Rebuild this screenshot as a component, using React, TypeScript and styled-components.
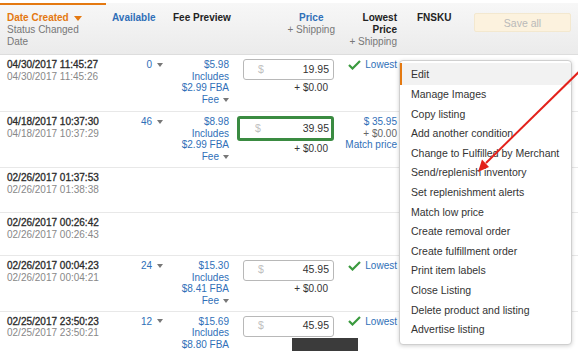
import React from "react";
import styled, { createGlobalStyle } from "styled-components";

const Global = createGlobalStyle`
  html, body { margin: 0; padding: 0; background: #fff; }
  body {
    font-family: "Liberation Sans", Arial, sans-serif;
    font-size: 10px;
    color: #333;
    width: 578px;
    height: 351px;
    overflow: hidden;
  }
`;

const COLS = "106px 59px 70px 105px 60px 68px 1fr";

const BLUE = "#2f6fb8";
const ORANGE = "#e47911";

const Page = styled.div`
  position: relative;
  width: 578px;
  height: 351px;
  overflow: hidden;
  padding-top: 3px;
  box-sizing: border-box;
`;

const Header = styled.div`
  display: grid;
  grid-template-columns: ${COLS};
  height: 52px;
  box-sizing: border-box;
  background: linear-gradient(#f7f7f7, #ebebeb);
  border-bottom: 1px solid #dddddd;
  line-height: 12px;
`;

const HeadCell = styled.div<{ $align?: "left" | "right" | "center"; $padL?: number; $padR?: number }>`
  display: flex;
  flex-direction: column;
  align-items: ${(p) => (p.$align === "right" ? "flex-end" : p.$align === "center" ? "center" : "flex-start")};
  text-align: ${(p) => p.$align ?? "left"};
  padding: 9px ${(p) => p.$padR ?? 0}px 0 ${(p) => p.$padL ?? 0}px;
`;

const SortHead = styled.div`
  border-top: 2px solid ${ORANGE};
  padding: 7px 0 0 7px;
`;

const HeadTitle = styled.div<{ $tone: "orange" | "blue" | "dark" }>`
  font-weight: bold;
  color: ${(p) => (p.$tone === "orange" ? ORANGE : p.$tone === "blue" ? BLUE : "#222")};
  display: flex;
  align-items: center;
  gap: 5px;
`;

const HeadSub = styled.div`
  color: #777;
`;

const PriceHead = styled.div`
  display: flex;
  flex-direction: column;
  align-items: center;
`;

const ActionCell = styled.div`
  padding: 10px 0 0 6px;
`;

const SaveButton = styled.button`
  width: 97px;
  height: 19px;
  border: 1px solid #f3e8cf;
  border-radius: 2px;
  background: #fcf2de;
  color: #b9b9b9;
  font-family: "Liberation Sans", Arial, sans-serif;
  font-size: 10.5px;
  padding: 0;
`;

const Row = styled.div<{ $min: number }>`
  display: grid;
  grid-template-columns: ${COLS};
  padding: 4px 0;
  min-height: ${(p) => p.$min}px;
  box-sizing: border-box;
  border-bottom: 1px solid #e8e8e8;
  line-height: 11.7px;
`;

const DateCell = styled.div`
  padding-left: 7px;
`;

const DateMain = styled.div`
  color: #2a2a2a;
  -webkit-text-stroke: 0.3px #2a2a2a;
`;

const DateSub = styled.div`
  color: #888;
`;

const AvailCell = styled.div`
  display: flex;
  justify-content: flex-end;
  align-items: flex-start;
  gap: 5px;
  padding-right: 2px;
  color: ${BLUE};
`;

const CaretWrap = styled.span`
  display: inline-flex;
  align-items: center;
  height: 11.7px;
`;

const FeeCell = styled.div`
  text-align: right;
  padding-right: 6px;
  color: ${BLUE};
`;

const FeeLine = styled.div`
  display: flex;
  justify-content: flex-end;
  align-items: center;
  gap: 4px;
`;

const PriceCell = styled.div`
  display: flex;
  flex-direction: column;
  align-items: flex-end;
  padding-right: 6px;
`;

const PriceBox = styled.div<{ $focused?: boolean }>`
  box-sizing: border-box;
  width: ${(p) => (p.$focused ? 97 : 91)}px;
  height: ${(p) => (p.$focused ? 25 : 21)}px;
  border: ${(p) => (p.$focused ? "3px solid #3a8b41" : "1px solid #b8b8b8")};
  border-radius: 3px;
  display: flex;
  align-items: center;
  justify-content: space-between;
  padding: ${(p) => (p.$focused ? "0 2px 0 15px" : "0 4px 0 14px")};
  background: #fff;
  font-size: 10.5px;
`;

const Dollar = styled.span`
  color: #c0c0c0;
`;

const PriceValue = styled.span`
  color: #333;
`;

const Shipping = styled.div`
  margin-top: 2px;
  margin-right: 6px;
  color: #333;
`;

const LowestCell = styled.div`
  display: flex;
  flex-direction: column;
  align-items: flex-end;
  padding-right: 3px;
  color: ${BLUE};
`;

const LowestLine = styled.div`
  display: flex;
  align-items: center;
  gap: 4px;
`;

const GrayLine = styled.div`
  color: #666;
`;

const Menu = styled.div`
  position: absolute;
  top: 60px;
  left: 399px;
  width: 173px;
  box-sizing: border-box;
  background: #fff;
  border: 1px solid #cfcfcf;
  border-radius: 4px;
  box-shadow: 0 1px 4px rgba(0, 0, 0, 0.18);
  padding: 2px 0 4px;
  font-size: 10.5px;
  color: #333;
`;

const MenuItem = styled.div<{ $active?: boolean }>`
  height: ${(p) => (p.$active ? 22 : 19.6)}px;
  line-height: ${(p) => (p.$active ? 22 : 19.6)}px;
  border-left: 2px solid ${(p) => (p.$active ? ORANGE : "transparent")};
  background: ${(p) => (p.$active ? "#f2f2f2" : "transparent")};
  padding-left: 9px;
  white-space: nowrap;
`;

const Redacted = styled.div`
  position: absolute;
  left: 292px;
  top: 338px;
  width: 66px;
  height: 14px;
  background: #3b3b3b;
  filter: blur(0.6px);
`;

const ArrowLayer = styled.svg`
  position: absolute;
  left: 0;
  top: 0;
  pointer-events: none;
`;

const Caret = ({ color = "#777" }: { color?: string }) => (
  <CaretWrap>
    <svg width="6" height="4" viewBox="0 0 6 4">
      <path d="M0 0 L6 0 L3 4 Z" fill={color} />
    </svg>
  </CaretWrap>
);

const Check = () => (
  <svg width="13" height="10" viewBox="0 0 13 10">
    <path d="M1 5 L4.5 8.5 L12 1" fill="none" stroke="#3a9a3e" strokeWidth="2.2" />
  </svg>
);

type RowData = {
  created: string;
  changed: string;
  avail?: string;
  fee?: string[];
  feeCaret?: boolean;
  price?: string;
  focused?: boolean;
  shipping?: boolean;
  lowest?: "lowest" | "match";
  min: number;
};

const rows: RowData[] = [
  {
    created: "04/30/2017 11:45:27",
    changed: "04/30/2017 11:45:26",
    avail: "0",
    fee: ["$5.98", "Includes", "$2.99 FBA"],
    feeCaret: true,
    price: "19.95",
    shipping: true,
    lowest: "lowest",
    min: 57,
  },
  {
    created: "04/18/2017 10:37:30",
    changed: "04/18/2017 10:37:29",
    avail: "46",
    fee: ["$8.98", "Includes", "$2.99 FBA"],
    feeCaret: true,
    price: "39.95",
    focused: true,
    shipping: true,
    lowest: "match",
    min: 55,
  },
  { created: "02/26/2017 01:37:53", changed: "02/26/2017 01:38:38", min: 45 },
  { created: "02/26/2017 00:26:42", changed: "02/26/2017 00:26:43", min: 43 },
  {
    created: "02/26/2017 00:04:23",
    changed: "02/26/2017 00:04:21",
    avail: "24",
    fee: ["$15.30", "Includes", "$8.41 FBA"],
    feeCaret: true,
    price: "45.95",
    shipping: true,
    lowest: "lowest",
    min: 55,
  },
  {
    created: "02/25/2017 23:50:23",
    changed: "02/25/2017 23:50:21",
    avail: "12",
    fee: ["$15.69", "Includes", "$8.80 FBA"],
    feeCaret: false,
    price: "45.95",
    shipping: false,
    lowest: "lowest",
    min: 55,
  },
];

const menuItems = [
  "Edit",
  "Manage Images",
  "Copy listing",
  "Add another condition",
  "Change to Fulfilled by Merchant",
  "Send/replenish inventory",
  "Set replenishment alerts",
  "Match low price",
  "Create removal order",
  "Create fulfillment order",
  "Print item labels",
  "Close Listing",
  "Delete product and listing",
  "Advertise listing",
];

export default function App() {
  return (
    <Page>
      <Global />
      <Header>
        <SortHead>
          <HeadTitle $tone="orange">
            Date Created
            <svg width="8" height="5" viewBox="0 0 8 5">
              <path d="M0 0 L8 0 L4 5 Z" fill={ORANGE} />
            </svg>
          </HeadTitle>
          <HeadSub>Status Changed</HeadSub>
          <HeadSub>Date</HeadSub>
        </SortHead>
        <HeadCell $padL={6}>
          <HeadTitle $tone="blue">Available</HeadTitle>
        </HeadCell>
        <HeadCell $padL={8}>
          <HeadTitle $tone="dark">Fee Preview</HeadTitle>
        </HeadCell>
        <HeadCell $align="right" $padR={5}>
          <PriceHead>
            <HeadTitle $tone="blue">Price</HeadTitle>
            <HeadSub>+ Shipping</HeadSub>
          </PriceHead>
        </HeadCell>
        <HeadCell $align="right" $padR={3}>
          <HeadTitle $tone="dark">Lowest</HeadTitle>
          <HeadTitle $tone="dark">Price</HeadTitle>
          <HeadSub>+ Shipping</HeadSub>
        </HeadCell>
        <HeadCell $padL={17}>
          <HeadTitle $tone="dark">FNSKU</HeadTitle>
        </HeadCell>
        <ActionCell>
          <SaveButton>Save all</SaveButton>
        </ActionCell>
      </Header>

      {rows.map((r) => (
        <Row key={r.created} $min={r.min}>
          <DateCell>
            <DateMain>{r.created}</DateMain>
            <DateSub>{r.changed}</DateSub>
          </DateCell>
          <AvailCell>
            {r.avail && (
              <>
                <span>{r.avail}</span>
                <Caret />
              </>
            )}
          </AvailCell>
          <FeeCell>
            {r.fee?.map((f) => (
              <FeeLine key={f}>{f}</FeeLine>
            ))}
            {r.feeCaret && (
              <FeeLine>
                Fee <Caret />
              </FeeLine>
            )}
          </FeeCell>
          <PriceCell>
            {r.price && (
              <PriceBox $focused={r.focused}>
                <Dollar>$</Dollar>
                <PriceValue>{r.price}</PriceValue>
              </PriceBox>
            )}
            {r.shipping && <Shipping>+ $0.00</Shipping>}
          </PriceCell>
          <LowestCell>
            {r.lowest === "lowest" && (
              <LowestLine>
                <Check />
                Lowest
              </LowestLine>
            )}
            {r.lowest === "match" && (
              <>
                <div>$ 35.95</div>
                <GrayLine>+ $0.00</GrayLine>
                <div>Match price</div>
              </>
            )}
          </LowestCell>
          <div />
          <div />
        </Row>
      ))}

      <Menu>
        {menuItems.map((m, i) => (
          <MenuItem key={m} $active={i === 0}>
            {m}
          </MenuItem>
        ))}
      </Menu>

      <Redacted />

      <ArrowLayer width="578" height="351" viewBox="0 0 578 351">
        <line x1="590" y1="61" x2="486" y2="163" stroke="#e3211b" strokeWidth="2" />
        <polygon points="478,172 489,167 482,159.5" fill="#e3211b" />
      </ArrowLayer>
    </Page>
  );
}
